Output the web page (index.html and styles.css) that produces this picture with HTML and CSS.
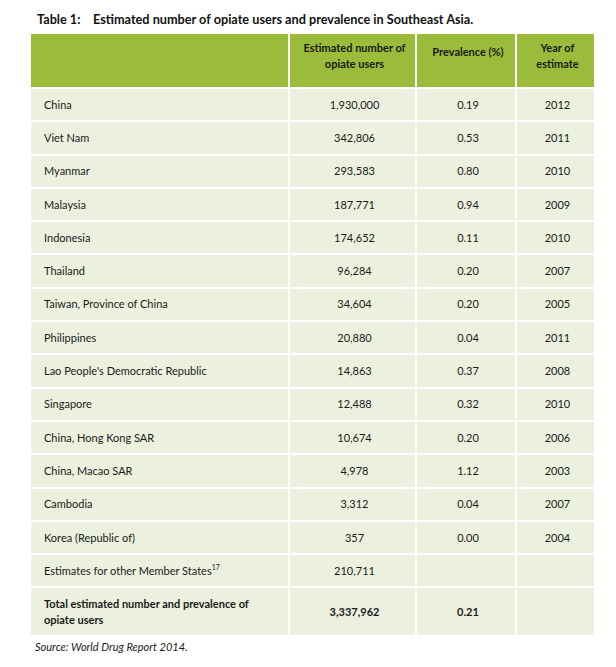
FILE: index.html
```html
<!DOCTYPE html>
<html>
<head>
<meta charset="utf-8">
<link rel="stylesheet" href="styles.css">
</head>
<body>
<div class="page">
  <h1 class="title"><span class="label">Table 1:</span>Estimated number of opiate users and prevalence in Southeast Asia.</h1>
  <table class="data">
    <colgroup>
      <col class="c1"><col class="c2"><col class="c3"><col class="c4">
    </colgroup>
    <thead>
      <tr>
        <th></th>
        <th>Estimated number of<br>opiate users</th>
        <th class="single">Prevalence (%)</th>
        <th>Year of<br>estimate</th>
      </tr>
    </thead>
    <tbody>
      <tr><td>China</td><td>1,930,000</td><td>0.19</td><td>2012</td></tr>
      <tr><td>Viet Nam</td><td>342,806</td><td>0.53</td><td>2011</td></tr>
      <tr><td>Myanmar</td><td>293,583</td><td>0.80</td><td>2010</td></tr>
      <tr><td>Malaysia</td><td>187,771</td><td>0.94</td><td>2009</td></tr>
      <tr><td>Indonesia</td><td>174,652</td><td>0.11</td><td>2010</td></tr>
      <tr><td>Thailand</td><td>96,284</td><td>0.20</td><td>2007</td></tr>
      <tr><td>Taiwan, Province of China</td><td>34,604</td><td>0.20</td><td>2005</td></tr>
      <tr><td>Philippines</td><td>20,880</td><td>0.04</td><td>2011</td></tr>
      <tr><td>Lao People's Democratic Republic</td><td>14,863</td><td>0.37</td><td>2008</td></tr>
      <tr><td>Singapore</td><td>12,488</td><td>0.32</td><td>2010</td></tr>
      <tr><td>China, Hong Kong SAR</td><td>10,674</td><td>0.20</td><td>2006</td></tr>
      <tr><td>China, Macao SAR</td><td>4,978</td><td>1.12</td><td>2003</td></tr>
      <tr><td>Cambodia</td><td>3,312</td><td>0.04</td><td>2007</td></tr>
      <tr><td>Korea (Republic of)</td><td>357</td><td>0.00</td><td>2004</td></tr>
      <tr><td>Estimates for other Member States<sup>17</sup></td><td>210,711</td><td></td><td></td></tr>
      <tr class="total"><td>Total estimated number and prevalence of<br>opiate users</td><td>3,337,962</td><td>0.21</td><td></td></tr>
    </tbody>
  </table>
  <p class="source">Source: World Drug Report 2014.</p>
</div>
</body>
</html>
```
FILE: styles.css
```css
html, body {
  margin: 0;
  padding: 0;
  background: #ffffff;
}
.page {
  padding: 11px 0 0 29px;
  font-family: Lato, "Open Sans", sans-serif;
  color: #1a1a1a;
}
.title {
  margin: 0 0 5px 8px;
  font-size: 12.7px;
  line-height: 16px;
  font-weight: bold;
  color: #111;
}
.title .label {
  display: inline-block;
  width: 56px;
}
.data {
  border-collapse: collapse;
  table-layout: fixed;
  width: 565px;
  font-size: 11px;
}
.c1 { width: 259px; }
.c2 { width: 127px; }
.c3 { width: 100px; }
.c4 { width: 79px; }
.data th, .data td {
  border: 2px solid #ffffff;
}
.data th {
  background: #9bbb3b;
  height: 27px;
  padding: 4px 2px 14px 6px;
  font-weight: bold;
  line-height: 16px;
  text-align: center;
  vertical-align: middle;
  color: #1a1a1a;
}
.data th.single {
  padding-bottom: 22px;
}
.data td {
  background: #ebf1de;
  height: 31.3px;
  padding: 0 2px 0 6px;
  text-align: center;
  vertical-align: middle;
  line-height: 16px;
}
.data td:first-child {
  text-align: left;
  padding-left: 13px;
}
.data sup {
  font-size: 7px;
  line-height: 0;
  vertical-align: 5px;
}
.data tr.total td {
  height: 47px;
  font-weight: bold;
}
.source {
  margin: 2px 0 0 6px;
  font-size: 11px;
  font-style: italic;
  line-height: 16px;
  color: #1a1a1a;
}
```
